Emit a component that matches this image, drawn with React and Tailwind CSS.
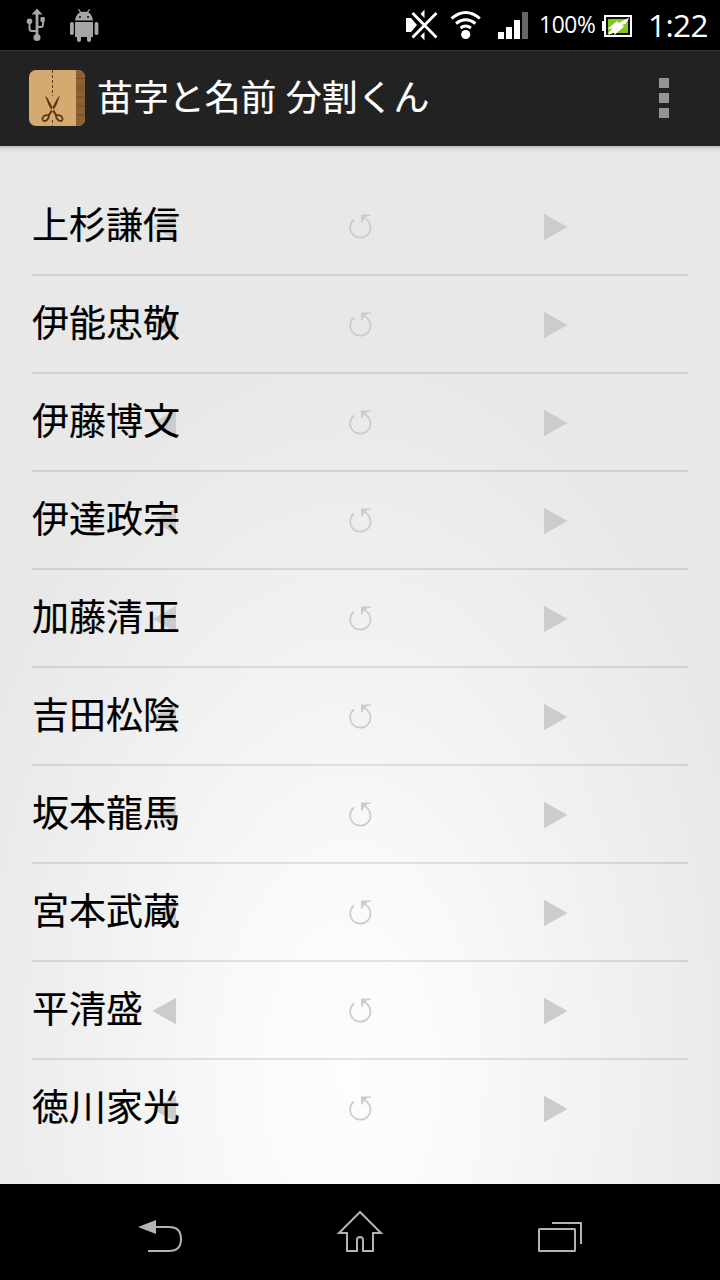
const names = ['上杉謙信', '伊能忠敬', '伊藤博文', '伊達政宗', '加藤清正', '吉田松陰', '坂本龍馬', '宮本武蔵', '平清盛', '徳川家光'];

function StatusBar() {
  return (
    <header className="flex h-[50px] shrink-0 items-center justify-between bg-black text-white">
      <svg width="120" height="50" viewBox="0 0 120 50" fill="#a6a6a6">
        <path d="M37 8.500l5.500 6h-11z" />
        <g fill="none" stroke="#a6a6a6" strokeWidth="2">
          <path d="M37 12v26" strokeWidth="2.800" />
          <path d="M29.500 22v6.500q0 2.500 2.500 2.500h5M43 20v4.500q0 2.500-2.500 2.500H37" />
        </g>
        <circle cx="29.500" cy="21.200" r="2.800" />
        <rect x="40.500" y="17" width="4.300" height="5" rx="1" />
        <circle cx="37" cy="37.500" r="3.500" />
        <path d="M75 20.500c.3-4 2.500-6.800 5-8.200l-2.200-2.600 1-.7 2.500 3c1.800-.5 3.800-.5 5.500 0l2.500-3 1 .7-2.200 2.600c2.700 1.500 4.600 4.200 4.900 8.200z" />
        <circle cx="80" cy="17" r="1" fill="#000" />
        <circle cx="88" cy="17" r="1" fill="#000" />
        <path d="M75 22h18v15h-2v3a2 2 0 0 1-4 0v-3h-6v3a2 2 0 0 1-4 0v-3h-2z" />
        <rect x="70" y="22" width="3.800" height="13" rx="1.800" />
        <rect x="94.600" y="22" width="3.800" height="13" rx="1.800" />
      </svg>
      <div className="flex items-center">
        <svg width="132" height="50" viewBox="400 0 132 50" fill="#fff">
          <path d="M406 18h5l6 7-6 7h-5zM420.500 14l4-4.500V18zM420.500 36l4 4.500V32z" />
          <path d="M412.500 13l24 24.500M436.500 13l-24 24.500" stroke="#000" strokeWidth="5" />
          <path d="M412.500 13l24 24.500M436.500 13l-24 24.500" stroke="#fff" strokeWidth="2.800" />
          <g fill="none" stroke="#fff" strokeWidth="2.900">
            <path d="M451.500 18.500q14.200-12 28.400 0M456 23.500q9.700-7.500 19.400 0M460.500 28q5.200-4 10.400 0" />
          </g>
          <circle cx="465.700" cy="34.500" r="4.600" />
          <path d="M498 32h6v7h-6zM506 27h6v12h-6zM514 20h6v19h-6z" />
          <path d="M522 12h6v27h-6z" fill="#666" />
        </svg>
        <span className="w-[70px] pl-[7px] pt-px text-[22.800px] tracking-[-0.4px]">100%</span>
        <svg width="32" height="50" viewBox="602 0 32 50">
          <path d="M602 21h3v10h-3z" fill="#fff" />
          <rect x="605" y="16" width="26" height="20" fill="#111" stroke="#fff" strokeWidth="2" />
          <rect x="608" y="19" width="20" height="14" fill="#86c718" />
          <path d="M629.500 17.500l-11 5.500-1.500-2-9.500 8 5-.5-5 5.500 2 .5 5-2-.5 3 10-9-2-1.500 3.500-1z" fill="#fff" />
        </svg>
        <time className="w-[86px] pl-[14px] text-[31.500px] tracking-[-0.600px]">1:22</time>
      </div>
    </header>
  );
}

function AppIcon() {
  return (
    <svg className="mb-[2px]" width="56" height="56" viewBox="0 0 56 56" fill="none">
      <rect width="56" height="56" rx="7" fill="#d4aa70" />
      <path d="M47 0h2a7 7 0 0 1 7 7v42a7 7 0 0 1-7 7h-2z" fill="#8d6033" />
      <path d="M47 8.500h9M47 18h8M47 27h9M48 36h8M48 45h8" stroke="#734b26" />
      <path d="M23.500 0v26M23.500 50v6" stroke="#594023" strokeDasharray="3 2" />
      <path d="M16 25.500l2.500 2.500 6 11 4 6.500-1.500 1-4-5.500-3.500-6zM31 25.500l-2.500 2.500-6 11-4 6.500 1.500 1 4-5.500 3.500-6z" fill="#593610" />
      <path d="M19.500 45.500c-3.500-1-6.500 1-6 4 1 3 6 1.500 6.500-4zM27.500 45.500c3.500-1 6.500 1 6 4-1 3-6 1.500-6.500-4z" stroke="#593610" strokeWidth="1.800" />
    </svg>
  );
}

function Row({ name }) {
  return (
    <li className="relative flex h-[98px] items-center border-b-2 border-black/10 last:border-transparent">
      <svg className="absolute inset-0" width="656" height="96" viewBox="0 0 656 96" fill="#ccc">
        <path d="M144 35.700v26.600L120.500 49z" />
        <path d="M512 35.700v26.600L535.500 49z" />
        <path d="M322 41.500a10.200 10.200 0 1 0 12.500-.1l-2.500-2" fill="none" stroke="#ccc" strokeWidth="1.700" />
        <path d="M329 36.500h10.200v1l-4.200.8-1.500 2-2.300 1.700-.7 2.500h-1.500z" />
      </svg>
      <span className="relative pb-[4px] text-[37px] leading-none [-webkit-text-stroke:0.2px_#000]">{name}</span>
    </li>
  );
}

export default function App() {
  return (
    <div className="flex h-[1280px] w-[720px] flex-col overflow-hidden bg-black font-['Open_Sans','Noto_Sans_CJK_JP',sans-serif]">
      <StatusBar />
      <div className="flex h-24 shrink-0 items-center border-t border-[#353535] bg-[#222] pl-[29px] pr-[51px] text-white">
        <AppIcon />
        <h1 className="ml-[12px] flex-1 whitespace-nowrap pb-[1px] text-[35.900px] leading-none [-webkit-text-stroke:0.2px_#fff]">苗字と名前 分割くん</h1>
        <button className="mb-[2px] flex flex-col gap-[5px]" aria-label="メニュー">
          <i className="size-[10px] bg-[#959595]" />
          <i className="size-[10px] bg-[#959595]" />
          <i className="size-[10px] bg-[#959595]" />
        </button>
      </div>
      <main className="h-[1038px] shrink-0 bg-[radial-gradient(ellipse_410px_720px_at_350px_930px,#fdfdfd_0%,#fafafa_25%,#e8e8e8_100%)] text-black">
        <div className="h-8 bg-linear-to-b from-[#bbb] via-[#ddd] via-10% to-transparent to-20%" />
        <ul className="px-8">
          {names.map((name) => <Row key={name} name={name} />)}
        </ul>
      </main>
      <nav className="h-24 shrink-0 bg-black">
        <svg width="720" height="96" viewBox="0 1184 720 96" fill="none" stroke="#b3b3b3" strokeWidth="2">
          <path d="M156 1227h13q12 0 12 12t-12 12h-21" />
          <path d="M138 1227l18-7v14z" fill="#b3b3b3" stroke="none" />
          <path d="M360 1212l-21 21h8v18h10v-11q0-3 3-3t3 3v11h10v-18h8z" />
          <rect x="539" y="1229" width="36" height="22" rx=".5" />
          <path d="M552 1223h29v21" />
        </svg>
      </nav>
    </div>
  );
}
